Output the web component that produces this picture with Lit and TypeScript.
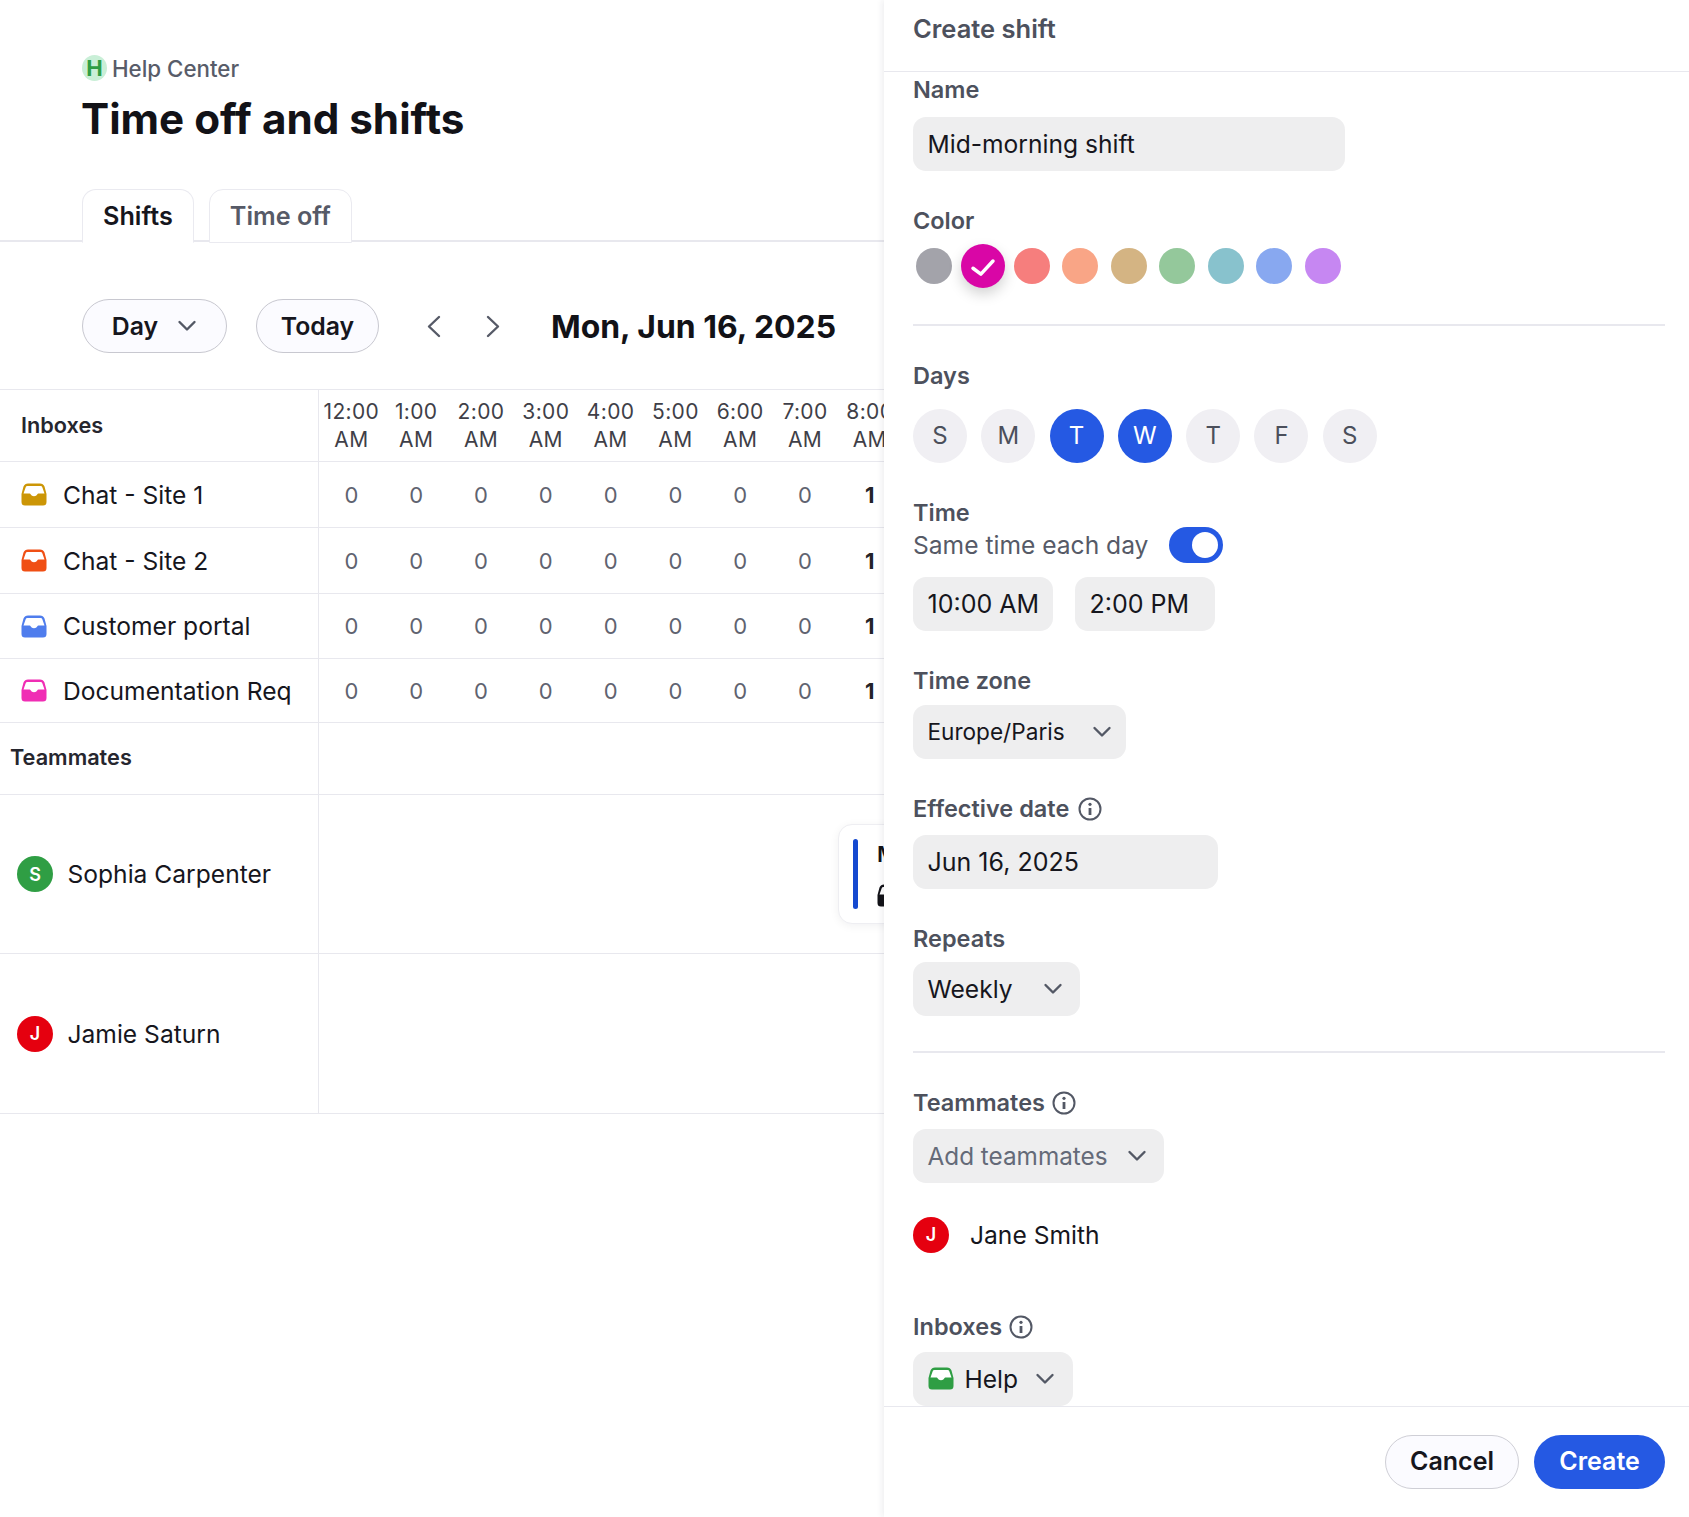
import { LitElement, html, css } from "lit";
import { customElement } from "lit/decorators.js";

const chevronDown = () => html`<svg class="chev" viewBox="0 0 20 20" fill="none" stroke="#535865" stroke-width="2.400" stroke-linecap="round" stroke-linejoin="round"><path d="M2.500 6 10 13.500 17.500 6"/></svg>`;
const inbox = (c: string) => html`<svg class="inbox" viewBox="0 0 26 23"><path d="M7 .5h12a5 5 0 0 1 4.500 3L25.500 11v8a3.500 3.500 0 0 1-3.500 3.500H4A3.500 3.500 0 0 1 .5 19v-8l2-7.500A5 5 0 0 1 7 .5z" fill=${c}/><path d="M6.500 3h13a2 2 0 0 1 1.900 1.400l2.100 6.100H18c-1 0-1.500.5-2 1.300-.5.9-1.200 1.400-3 1.400s-2.500-.5-3-1.400c-.5-.8-1-1.300-2-1.300H2.500l2.100-6.100A2 2 0 0 1 6.500 3z" fill="#fff"/></svg>`;
const info = html`<svg class="info" viewBox="0 0 24 24" fill="none"><circle cx="12" cy="12" r="10.500" stroke="#535865" stroke-width="2"/><circle cx="12" cy="7.300" r="1.600" fill="#535865"/><path d="M12 11v7" stroke="#535865" stroke-width="2.800"/></svg>`;

const hours = ["12:00", "1:00", "2:00", "3:00", "4:00", "5:00", "6:00", "7:00", "8:00"];
const inboxes = [
  { name: "Chat - Site 1", color: "#cc9606", row: "h66" },
  { name: "Chat - Site 2", color: "#f04f14", row: "h66" },
  { name: "Customer portal", color: "#4f7ded", row: "h65" },
  { name: "Documentation Req", color: "#f02db4", row: "h64" },
];
const swatches = ["#a3a3aa", "#d906a6", "#f67e7d", "#f9a586", "#d4b483", "#94c89b", "#88c2cd", "#88a8f0", "#c687f2"];
const days = [["S", 0], ["M", 0], ["T", 1], ["W", 1], ["T", 0], ["F", 0], ["S", 0]] as [string, number][];

@customElement("app-root")
export class AppRoot extends LitElement {
  static styles = css`
    :host { display: block; width: 1689px; height: 1517px; position: relative; overflow: hidden; background: #fff; font-family: Inter, "Liberation Sans", sans-serif; color: #16161d; font-size: 24.600px; }
    * { box-sizing: border-box; }
    .crumb { display: flex; align-items: center; gap: 5px; margin: 53px 0 0 82px; height: 30px; color: #585c69; font-size: 22.300px; font-weight: 500; }
    .hlogo { width: 25px; height: 26px; border-radius: 50%; background: #c9efd7; color: #2f9e44; font-weight: 700; font-size: 22px; display: flex; align-items: center; justify-content: center; }
    h1 { margin: 11px 0 0 81px; height: 50px; line-height: 50px; font-size: 42.200px; font-weight: 700; color: #121217; }
    .tabs { display: flex; gap: 15px; margin-top: 45px; height: 53px; padding-left: 82px; border-bottom: 2px solid #e8e8ee; }
    .tab { height: 53.500px; padding: 0 20px; display: flex; align-items: center; border: 1.500px solid #eaeaf0; border-radius: 14px 14px 0 0; font-weight: 600; font-size: 25.200px; color: #565a67; background: #fff; }
    .tab.on { color: #16161d; border-bottom-color: #fff; }
    .toolbar { display: flex; align-items: center; margin-top: 57px; height: 54px; padding-left: 82px; }
    .pill { height: 54px; border: 1px solid #c8c8d0; border-radius: 27px; background: #fbfbff; display: flex; align-items: center; justify-content: center; font-weight: 600; font-size: 24.800px; color: #16161d; }
    .pill.day { width: 145px; gap: 19px; }
    .pill.today { width: 123px; margin-left: 29px; }
    .chev { width: 20px; height: 20px; flex: none; }
    .nav { width: 24px; height: 24px; flex: none; }
    .nav.prev { margin-left: 44px; }
    .nav.next { margin-left: 33px; }
    .date { margin-left: 47px; font-size: 31.900px; font-weight: 700; color: #121217; white-space: nowrap; }
    .table { margin-top: 36px; border-top: 1px solid #e8e8ee; width: 884px; overflow: hidden; }
    .row { display: flex; border-bottom: 1.500px solid #e8e8ee; }
    .h72 { height: 72px; } .h66 { height: 66px; } .h65 { height: 65px; } .h64 { height: 64px; } .h159 { height: 159px; } .h160 { height: 160px; }
    .first { flex: none; width: 319px; border-right: 1.500px solid #e8e8ee; display: flex; align-items: center; white-space: nowrap; }
    .th { padding: 0 0 1px 21px; font-weight: 600; font-size: 21.700px; color: #26262e; }
    .th.team { padding: 0 0 3px 10px; }
    .ibx { padding-left: 21px; gap: 16px; }
    .person { padding-left: 17px; gap: 14.500px; }
    .inbox { width: 26px; height: 23px; flex: none; }
    .cells { display: flex; align-items: center; flex: 1; position: relative; }
    .cell { flex: none; width: 64.800px; text-align: center; white-space: nowrap; }
    .hour { font-size: 21px; line-height: 28px; color: #3f3f48; letter-spacing: 0.35px; }
    .num { font-size: 22px; color: #5f6370; }
    .num.one { color: #232329; font-weight: 700; }
    .av { width: 36px; height: 36px; flex: none; border-radius: 50%; color: #fff; font-weight: 600; font-size: 18px; display: flex; align-items: center; justify-content: center; }
    .green { background: #2f9e44; } .red { background: #e5000f; }
    .shift { position: absolute; left: 519px; top: 29px; width: 140px; height: 100px; background: #fff; border: 1px solid #eeeef2; border-radius: 14px; box-shadow: 0 2px 10px rgba(20,20,40,.06); }
    .bar { position: absolute; left: 14px; top: 14px; width: 5px; height: 70px; border-radius: 3px; background: #1549d0; }
    .shift b { position: absolute; left: 38px; top: 16px; font-size: 22px; font-weight: 600; color: #121217; }
    .shift .inbox { position: absolute; left: 38px; top: 59px; }

    .drawer { position: absolute; top: 0; right: 0; bottom: 0; width: 805px; background: #fff; box-shadow: -2px 0 6px rgba(40,40,60,.08); display: flex; flex-direction: column; }
    .dhead { flex: none; height: 72px; padding: 14px 0 0 29px; border-bottom: 1.500px solid #e8e8ee; font-size: 25.500px; font-weight: 600; line-height: 30px; color: #4d515d; }
    .body { flex: 1; overflow: hidden; padding: 3px 24px 0 29px; }
    .label { height: 30px; line-height: 30px; display: flex; align-items: center; gap: 9px; font-size: 23.500px; font-weight: 600; color: #4d515d; }
    .label.g7 { gap: 7px; }
    .mt35 { margin-top: 35px; } .mt59 { margin-top: 59px; }
    .ctl { display: flex; align-items: center; height: 54px; border-radius: 13px; background: #eeeeef; padding: 0 17px 0 14.500px; color: #16161d; white-space: nowrap; justify-content: space-between; }
    .m8 { margin-top: 8px; } .m9 { margin-top: 9px; } .m10 { margin-top: 10px; } .m11 { margin-top: 11px; } .m12 { margin-top: 12px; }
    .w432 { width: 432px; } .w213 { width: 213px; } .w305 { width: 305px; } .w167 { width: 167px; } .w251 { width: 251px; } .w160 { width: 160px; } .w140 { width: 140px; }
    .f25 { font-size: 25px; }
    .tz { font-size: 22.600px; padding-right: 14px; }
    .muted { color: #646a78; font-size: 24.300px; }
    .swatches { display: flex; align-items: center; height: 44px; margin-top: 8px; padding-left: 3.300px; }
    .sw { width: 36px; height: 36px; border-radius: 50%; flex: none; margin-right: 12.500px; display: flex; align-items: center; justify-content: center; }
    .sw.sel { width: 44px; height: 44px; margin: 0 8.500px 0 -3.500px; box-shadow: 0 6px 14px rgba(0,0,0,.18); }
    .sw svg { width: 30px; height: 30px; }
    hr { border: 0; height: 1.500px; background: #e8e8ee; margin: 36px 0 0; }
    hr.tight { margin-top: 35.500px; }
    .days { display: flex; gap: 14.300px; margin-top: 18px; }
    .dayc { width: 54px; height: 54px; border-radius: 50%; background: #f0eff3; color: #4b4f5b; display: flex; align-items: center; justify-content: center; font-size: 24px; flex: none; }
    .dayc.on { background: #2559e3; color: #fff; }
    .same { display: flex; align-items: center; height: 30px; margin-top: 2px; gap: 21px; color: #565a67; white-space: nowrap; }
    .toggle { width: 54px; height: 36px; border-radius: 18px; background: #2559e3; display: flex; align-items: center; justify-content: flex-end; padding-right: 5px; }
    .knob { width: 26px; height: 26px; border-radius: 50%; background: #fff; }
    .times { display: flex; gap: 22px; margin-top: 17px; }
    .jane { display: flex; align-items: center; gap: 21px; height: 36px; margin-top: 34px; }
    .help { gap: 11px; justify-content: flex-start; }
    .help .chev { margin-left: 6px; }
    .info { width: 24px; height: 24px; flex: none; }
    .foot { flex: none; height: 111px; border-top: 1.500px solid #e8e8ee; display: flex; justify-content: flex-end; align-items: flex-start; gap: 15px; padding: 28px 24px 0 0; }
    .btn { height: 54px; border-radius: 27px; display: flex; align-items: center; justify-content: center; padding-bottom: 2px; font-size: 25px; font-weight: 600; }
    .cancel { width: 134px; background: #fbfbff; border: 1px solid #cfcfd6; color: #16161d; }
    .create { width: 131px; background: #2559e3; color: #fff; }
  `;

  render() {
    return html`
      <div class="crumb"><span class="hlogo">H</span><span>Help Center</span></div>
      <h1>Time off and shifts</h1>
      <div class="tabs"><div class="tab on">Shifts</div><div class="tab">Time off</div></div>
      <div class="toolbar">
        <div class="pill day"><span>Day</span>${chevronDown()}</div>
        <div class="pill today">Today</div>
        <svg class="nav prev" viewBox="0 0 24 24" fill="none" stroke="#565a67" stroke-width="2.400" stroke-linecap="round" stroke-linejoin="round"><path d="M16 3 6 12.500 16 22"/></svg>
        <svg class="nav next" viewBox="0 0 24 24" fill="none" stroke="#565a67" stroke-width="2.400" stroke-linecap="round" stroke-linejoin="round"><path d="M8 3 18 12.500 8 22"/></svg>
        <div class="date">Mon, Jun 16, 2025</div>
      </div>
      <div class="table">
        <div class="row h72">
          <div class="first th">Inboxes</div>
          <div class="cells">${hours.map((h) => html`<div class="cell hour">${h}<br />AM</div>`)}</div>
        </div>
        ${inboxes.map((i) => html`
          <div class="row ${i.row}">
            <div class="first ibx">${inbox(i.color)}<span>${i.name}</span></div>
            <div class="cells">${hours.map((_, n) => html`<div class="cell num ${n === 8 ? "one" : ""}">${n === 8 ? 1 : 0}</div>`)}</div>
          </div>`)}
        <div class="row h72"><div class="first th team">Teammates</div><div class="cells"></div></div>
        <div class="row h159">
          <div class="first person"><span class="av green">S</span><span>Sophia Carpenter</span></div>
          <div class="cells">
            <div class="shift"><span class="bar"></span><b>Mid</b>${inbox("#121217")}</div>
          </div>
        </div>
        <div class="row h160">
          <div class="first person"><span class="av red">J</span><span>Jamie Saturn</span></div>
          <div class="cells"></div>
        </div>
      </div>

      <aside class="drawer">
        <div class="dhead">Create shift</div>
        <div class="body">
          <div class="label">Name</div>
          <div class="ctl m12 w432">Mid-morning shift</div>

          <div class="label mt35">Color</div>
          <div class="swatches">
            ${swatches.map((c, i) => html`<span class="sw ${i === 1 ? "sel" : ""}" style="background:${c}">
              ${i === 1 ? html`<svg viewBox="0 0 24 24" fill="none" stroke="#fff" stroke-width="2.800" stroke-linecap="round" stroke-linejoin="round"><path d="M4 13.800 10.300 18.500 20 8"/></svg>` : ""}
            </span>`)}
          </div>
          <hr />

          <div class="label mt35">Days</div>
          <div class="days">${days.map(([d, on]) => html`<div class="dayc ${on ? "on" : ""}">${d}</div>`)}</div>

          <div class="label mt35">Time</div>
          <div class="same"><span>Same time each day</span><span class="toggle"><span class="knob"></span></span></div>
          <div class="times"><div class="ctl w140 f25">10:00 AM</div><div class="ctl w140 f25">2:00 PM</div></div>

          <div class="label mt35">Time zone</div>
          <div class="ctl m9 w213 tz"><span>Europe/Paris</span>${chevronDown()}</div>

          <div class="label mt35">Effective date ${info}</div>
          <div class="ctl m11 w305 f25">Jun 16, 2025</div>

          <div class="label mt35">Repeats</div>
          <div class="ctl m8 w167"><span>Weekly</span>${chevronDown()}</div>
          <hr class="tight" />

          <div class="label mt35 g7">Teammates ${info}</div>
          <div class="ctl m11 w251"><span class="muted">Add teammates</span>${chevronDown()}</div>
          <div class="jane"><span class="av red">J</span><span>Jane Smith</span></div>

          <div class="label mt59 g7">Inboxes ${info}</div>
          <div class="ctl m10 w160 help">${inbox("#2f9e44")}<span>Help</span>${chevronDown()}</div>
        </div>
        <div class="foot"><div class="btn cancel">Cancel</div><div class="btn create">Create</div></div>
      </aside>
    `;
  }
}
